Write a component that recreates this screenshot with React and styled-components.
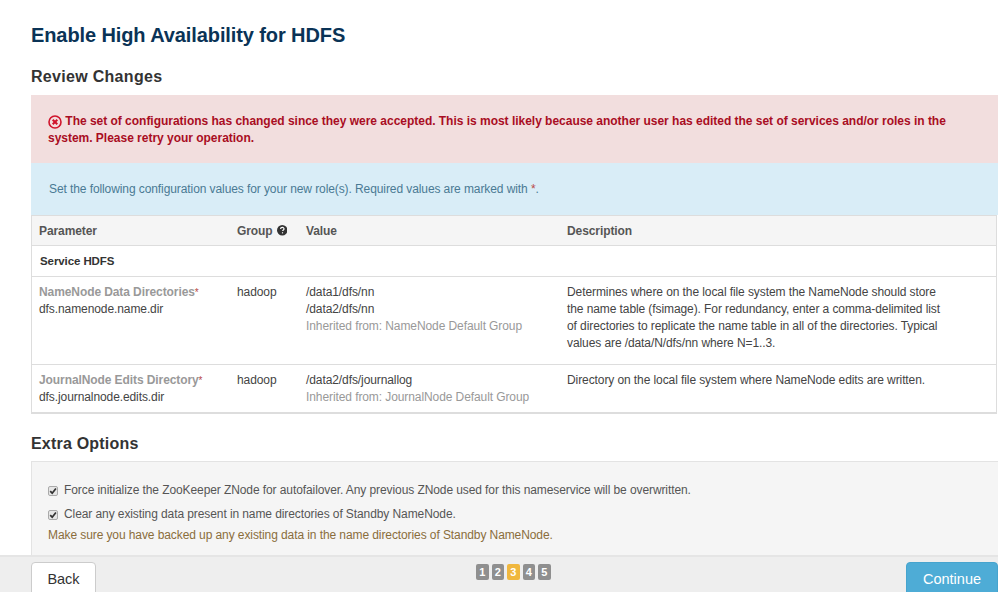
import React from 'react';
import styled, { createGlobalStyle } from 'styled-components';

const GlobalStyle = createGlobalStyle`
  html, body {
    margin: 0;
    padding: 0;
    height: 100%;
    overflow: hidden;
    background: #fff;
  }
  body {
    font-family: "Liberation Sans", Arial, sans-serif;
    font-size: 12px;
    line-height: 17px;
    letter-spacing: -0.09px;
    color: #444;
  }
`;

const rows = [
  {
    label: 'NameNode Data Directories',
    name: 'dfs.namenode.name.dir',
    group: 'hadoop',
    values: ['/data1/dfs/nn', '/data2/dfs/nn'],
    inherited: 'Inherited from: NameNode Default Group',
    description: 'Determines where on the local file system the NameNode should store the name table (fsimage). For redundancy, enter a comma-delimited list of directories to replicate the name table in all of the directories. Typical values are /data/N/dfs/nn where N=1..3.',
    height: 87,
  },
  {
    label: 'JournalNode Edits Directory',
    name: 'dfs.journalnode.edits.dir',
    group: 'hadoop',
    values: ['/data2/dfs/journallog'],
    inherited: 'Inherited from: JournalNode Default Group',
    description: 'Directory on the local file system where NameNode edits are written.',
    height: 48,
  },
];

const ErrorIcon = () => (
  <svg width="14" height="14" viewBox="0 0 14 14" aria-hidden="true">
    <circle cx="7" cy="7" r="6" fill="none" stroke="#d0142c" strokeWidth="1.6" />
    <path d="M4.7 4.7l4.6 4.6M9.3 4.7l-4.6 4.6" stroke="#d0142c" strokeWidth="2" />
  </svg>
);

const HelpIcon = () => (
  <svg width="10.5" height="10.5" viewBox="0 0 10 10" aria-hidden="true">
    <circle cx="5" cy="5" r="5" fill="#333" />
    <path d="M3.4 3.9c0-1 .7-1.6 1.7-1.6s1.6.6 1.6 1.4c0 1.1-1.3 1.1-1.3 2.1" fill="none" stroke="#fff" strokeWidth="1.1" />
    <rect x="4.7" y="6.9" width="1.1" height="1.1" fill="#fff" />
  </svg>
);

const CheckBox = () => (
  <CheckFrame>
    <svg width="8" height="8" viewBox="0 0 8 8" aria-hidden="true">
      <path d="M1.2 4.2l2 2L6.9 1.4" fill="none" stroke="#333" strokeWidth="1.7" />
    </svg>
  </CheckFrame>
);

const App = () => (
  <Page>
    <GlobalStyle />
    <Main>
      <Title>Enable High Availability for HDFS</Title>
      <SectionTitle>Review Changes</SectionTitle>
      <ErrorAlert>
        <ErrorIcon />
        {' '}The set of configurations has changed since they were accepted. This is most likely because another user has edited the set of services and/or roles in the system. Please retry your operation.
      </ErrorAlert>
      <InfoAlert>
        Set the following configuration values for your new role(s). Required values are marked with <Star>*</Star>.
      </InfoAlert>
      <ConfigTable>
        <HeaderRow>
          <HeadCell>Parameter</HeadCell>
          <HeadCell>Group <HelpIcon /></HeadCell>
          <HeadCell>Value</HeadCell>
          <HeadCell>Description</HeadCell>
        </HeaderRow>
        <ServiceRow>Service HDFS</ServiceRow>
        {rows.map((row) => (
          <BodyRow key={row.name} $height={row.height}>
            <Cell>
              <ParamLabel>{row.label}<SmallStar>*</SmallStar></ParamLabel>
              <div>{row.name}</div>
            </Cell>
            <Cell>{row.group}</Cell>
            <Cell>
              {row.values.map((v) => <div key={v}>{v}</div>)}
              <Muted>{row.inherited}</Muted>
            </Cell>
            <Cell><Description>{row.description}</Description></Cell>
          </BodyRow>
        ))}
      </ConfigTable>
      <ExtraTitle>Extra Options</ExtraTitle>
      <OptionsPanel>
        <OptionRow>
          <CheckBox />
          Force initialize the ZooKeeper ZNode for autofailover. Any previous ZNode used for this nameservice will be overwritten.
        </OptionRow>
        <OptionRow>
          <CheckBox />
          Clear any existing data present in name directories of Standby NameNode.
        </OptionRow>
        <Warning>Make sure you have backed up any existing data in the name directories of Standby NameNode.</Warning>
      </OptionsPanel>
    </Main>
    <Footer>
      <BackButton>Back</BackButton>
      <Steps>
        {[1, 2, 3, 4, 5].map((n) => (
          <Step key={n} $active={n === 3}>{n}</Step>
        ))}
      </Steps>
      <ContinueButton>Continue</ContinueButton>
    </Footer>
  </Page>
);

const Page = styled.div`
  display: flex;
  flex-direction: column;
  width: 998px;
  height: 592px;
  overflow: hidden;
`;

const Main = styled.div`
  flex: 1;
  min-height: 0;
  overflow: hidden;
  padding: 23px 0 0 31px;
`;

const Title = styled.h1`
  margin: 0;
  font-size: 20px;
  line-height: 24px;
  font-weight: bold;
  letter-spacing: -0.1px;
  color: #0a3356;
`;

const SectionTitle = styled.h2`
  margin: 18px 0 6px;
  font-size: 16px;
  line-height: 24px;
  font-weight: bold;
  letter-spacing: 0.3px;
  color: #333;
`;

const ErrorAlert = styled.div`
  height: 68px;
  box-sizing: border-box;
  padding: 18px 48px 0 17px;
  background: #f2dede;
  color: #a90d23;
  font-weight: bold;
  letter-spacing: -0.02px;

  svg {
    vertical-align: -2px;
    margin: -2px 0;
  }
`;

const InfoAlert = styled.div`
  height: 52px;
  box-sizing: border-box;
  padding: 18px 18px 0;
  background: #d9edf7;
  color: #4a7a94;
`;

const Star = styled.span`
  color: #b94a48;
`;

const SmallStar = styled(Star)`
  font-size: 10px;
  font-weight: normal;
`;

const ConfigTable = styled.div`
  border: 1px solid #ddd;
  border-width: 0 1px 2px 1px;
  margin-right: 1px;
`;

const columns = 'grid-template-columns: 198px 69px 261px 1fr;';

const HeaderRow = styled.div`
  display: grid;
  ${columns}
  height: 31px;
  box-sizing: border-box;
  padding: 1px 7px 0;
  align-items: center;
  background: #f5f5f5;
  border-bottom: 1px solid #ddd;
  border-top: 1px solid #ddd;
`;

const HeadCell = styled.div`
  font-weight: bold;
  color: #555;

  svg {
    vertical-align: -1px;
    margin-left: 1px;
  }
`;

const ServiceRow = styled.div`
  height: 31px;
  box-sizing: border-box;
  padding: 7px 8px 0;
  font-weight: bold;
  font-size: 11.5px;
  color: #333;
  border-bottom: 1px solid #ddd;
`;

const BodyRow = styled.div`
  display: grid;
  ${columns}
  height: ${(p) => p.$height}px;
  box-sizing: border-box;
  padding: 7px 7px 0;

  & + & {
    border-top: 1px solid #ddd;
  }
`;

const Cell = styled.div`
  color: #444;
`;

const ParamLabel = styled.div`
  font-weight: bold;
  color: #999;
`;

const Muted = styled.div`
  color: #999;
`;

const Description = styled.div`
  max-width: 380px;
`;

const ExtraTitle = styled(SectionTitle)`
  margin: 18px 0 5px;
  letter-spacing: 0.2px;
`;

const OptionsPanel = styled.div`
  height: 110px;
  box-sizing: border-box;
  padding: 20px 17px 0 16px;
  background: #f5f5f5;
  border: 1px solid #e3e3e3;
  border-right: 0;
`;

const OptionRow = styled.div`
  display: flex;
  align-items: center;
  gap: 6px;
  height: 17px;
  margin: 0 0 7px;
  color: #555;
`;

const CheckFrame = styled.span`
  display: flex;
  align-items: center;
  justify-content: center;
  width: 10px;
  height: 10px;
  box-sizing: border-box;
  background: #e6e6e6;
  border: 1px solid #aaa;
  border-radius: 2px;
`;

const Warning = styled.div`
  margin-top: -3px;
  color: #8a6d3b;
`;

const Footer = styled.div`
  flex: none;
  height: 37px;
  display: flex;
  align-items: flex-start;
  background: #eee;
  border-top: 2px solid #e5e5e5;
  box-sizing: border-box;
  padding: 5px 0 0 31px;
  overflow: hidden;
  letter-spacing: 0;
`;

const BackButton = styled.button`
  width: 65px;
  height: 44px;
  padding: 0 0 10px;
  background: #fff;
  border: 1px solid #ccc;
  border-radius: 4px;
  font-family: inherit;
  font-size: 14.5px;
  color: #333;
`;

const Steps = styled.div`
  display: flex;
  gap: 3px;
  margin: 2px 0 0 380px;
`;

const Step = styled.span`
  width: 12.5px;
  height: 16px;
  border-radius: 2px;
  background: ${(p) => (p.$active ? '#f0b73e' : '#8f8f8f')};
  color: #fff;
  font-size: 11px;
  font-weight: bold;
  line-height: 16px;
  text-align: center;
`;

const ContinueButton = styled.button`
  width: 92px;
  height: 44px;
  margin-left: auto;
  padding: 0 0 10px;
  background: #4eacd6;
  border: 1px solid #46a4ce;
  border-radius: 4px;
  font-family: inherit;
  font-size: 14.5px;
  color: #fff;
`;

export default App;
